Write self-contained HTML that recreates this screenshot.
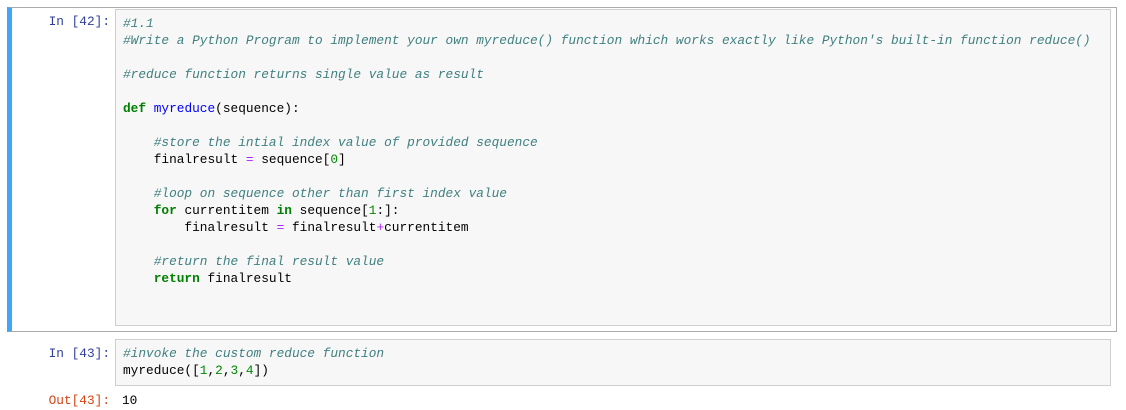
<!DOCTYPE html>
<html><head><style>
body{margin:0;background:#fff;width:1126px;height:410px;overflow:hidden;position:relative;font-family:"Liberation Mono",monospace;font-size:12.8px;}
.sel{position:absolute;left:7px;top:7px;width:1110px;height:325px;border:1px solid #ababab;border-left:5px solid #42a5f5;box-sizing:border-box;}
.inp{position:absolute;left:115px;width:996px;background:#f7f7f7;border:1px solid #cfcfcf;box-sizing:border-box;}
.pr{position:absolute;color:#303f9f;width:110px;text-align:right;left:0;}
pre{margin:0;font:inherit;line-height:17px;position:absolute;left:7px;top:5px;color:#000;}
.c{color:#408080;font-style:italic}.k{color:#008000;font-weight:bold}.f{color:#0000ff}.o{color:#aa22ff}.n{color:#080}
</style></head><body>
<div class="sel"></div>
<div class="pr" style="top:14px">In&nbsp;[42]:</div>
<div class="inp" style="top:9px;height:317px"><pre><span class="c">#1.1</span>
<span class="c">#Write a Python Program to implement your own myreduce() function which works exactly like Python's built-in function reduce()</span>

<span class="c">#reduce function returns single value as result</span>

<span class="k">def</span> <span class="f">myreduce</span>(sequence):

    <span class="c">#store the intial index value of provided sequence</span>
    finalresult <span class="o">=</span> sequence[<span class="n">0</span>]

    <span class="c">#loop on sequence other than first index value</span>
    <span class="k">for</span> currentitem <span class="k">in</span> sequence[<span class="n">1</span>:]:
        finalresult <span class="o">=</span> finalresult<span class="o">+</span>currentitem

    <span class="c">#return the final result value</span>
    <span class="k">return</span> finalresult</pre></div>
<div class="pr" style="top:346px">In&nbsp;[43]:</div>
<div class="inp" style="top:339px;height:47px"><pre><span class="c">#invoke the custom reduce function</span>
myreduce([<span class="n">1</span>,<span class="n">2</span>,<span class="n">3</span>,<span class="n">4</span>])</pre></div>
<div class="pr" style="top:393px;color:#d84315">Out[43]:</div>
<div style="position:absolute;left:122px;top:393px">10</div>
</body></html>
